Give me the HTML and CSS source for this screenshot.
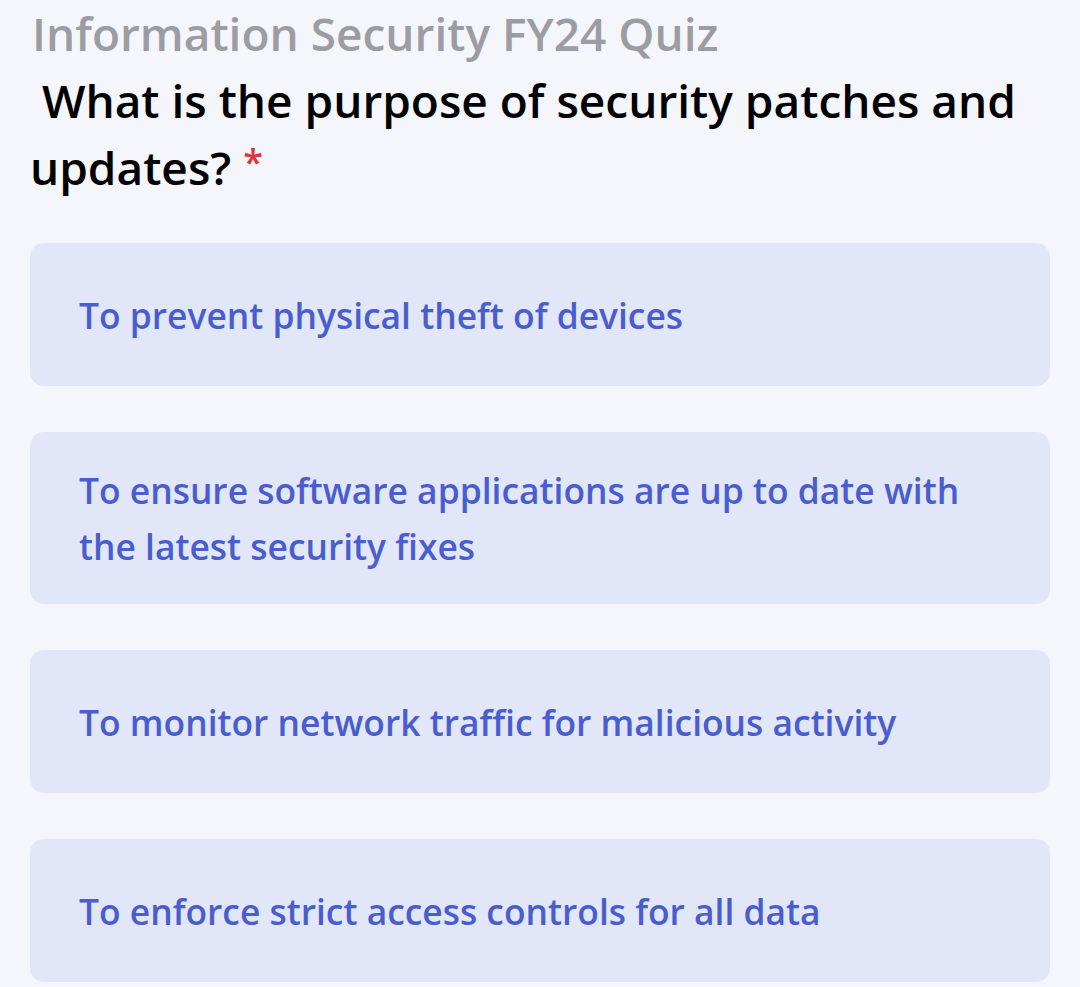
FILE: index.html
```html
<!DOCTYPE html>
<html lang="en">
<head>
<meta charset="utf-8">
<title>Information Security FY24 Quiz</title>
<link rel="stylesheet" href="styles.css">
</head>
<body>
<main class="quiz">
  <h1 class="quiz-title">Information Security FY24 Quiz</h1>
  <h2 class="question">&nbsp;What is the purpose of security patches and updates? <span class="required">*</span></h2>
  <ul class="options">
    <li class="option">To prevent physical theft of devices</li>
    <li class="option">To ensure software applications are up to date with the latest security fixes</li>
    <li class="option">To monitor network traffic for malicious activity</li>
    <li class="option">To enforce strict access controls for all data</li>
  </ul>
</main>
</body>
</html>
```

FILE: styles.css
```css
html, body {
  margin: 0;
  padding: 0;
  background: #f5f6fb;
}
body {
  font-family: "Open Sans", "Noto Sans", sans-serif;
  height: 987px;
  overflow: hidden;
}
.quiz {
  padding: 0 30px;
}
.quiz-title {
  margin: 0;
  padding-left: 2px;
  font-size: 46px;
  line-height: 66px;
  font-weight: 600;
  color: #9b9da3;
}
.question {
  margin: 1px 0 0 0;
  font-size: 46px;
  line-height: 67px;
  font-weight: 600;
  color: #000;
}
.required {
  color: #d8383b;
  font-size: 36px;
  font-weight: 600;
  line-height: 0;
  vertical-align: 10px;
}
.options {
  list-style: none;
  margin: 42px 0 0 0;
  padding: 0;
  display: flex;
  flex-direction: column;
  gap: 46px;
}
.option {
  box-sizing: border-box;
  min-height: 143px;
  padding: 30px 49px;
  display: flex;
  align-items: center;
  background: #e1e7f9;
  border-radius: 14px;
  font-size: 35.4px;
  line-height: 56px;
  font-weight: 600;
  color: #4a5dcf;
}
```
